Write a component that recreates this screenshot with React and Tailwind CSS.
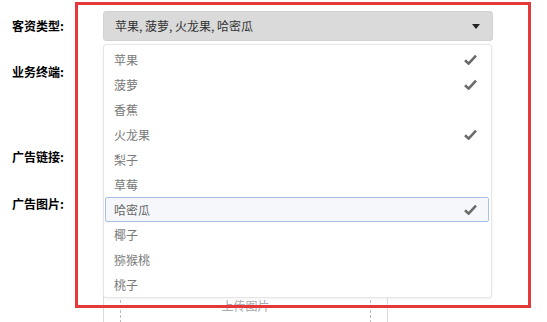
import React from "react";

const items = [
  { name: "苹果", checked: true },
  { name: "菠萝", checked: true },
  { name: "香蕉", checked: false },
  { name: "火龙果", checked: true },
  { name: "梨子", checked: false },
  { name: "草莓", checked: false },
  { name: "哈密瓜", checked: true, active: true },
  { name: "椰子", checked: false },
  { name: "猕猴桃", checked: false },
  { name: "桃子", checked: false },
];

function Check() {
  return (
    <svg width="13" height="11" viewBox="0 0 13 11" className="shrink-0">
      <path d="M1 6.2 L4.6 9.6 L12 1.6" fill="none" stroke="#6b6b6b" strokeWidth="2.6" strokeLinejoin="miter" />
    </svg>
  );
}

export default function App() {
  const font = { fontFamily: '"Microsoft YaHei", "Noto Sans CJK SC", "Noto Sans", sans-serif' };
  return (
    <div className="relative w-[547px] h-[322px] overflow-hidden bg-white text-[12px]" style={font}>
      {/* form */}
      <div className="flex flex-col pt-[11px] pl-[12px]">
        <div className="flex items-center h-[30px]">
          <div className="w-[91px] font-semibold text-black">客资类型:</div>
          <button className="w-[390px] h-[30px] flex items-center justify-between pl-[11px] pr-[12px] rounded-[3px] bg-[#dadada] border border-[#d2d2d2] text-[#333]">
            <span>苹果, 菠萝, 火龙果, 哈密瓜</span>
            <span className="w-0 h-0 border-l-[4px] border-r-[4px] border-t-[5px] border-l-transparent border-r-transparent border-t-[#222]" />
          </button>
        </div>
        <div className="flex items-center h-[30px] mt-[16px]">
          <div className="w-[91px] font-semibold text-black">业务终端:</div>
          <div className="w-[380px] h-[30px]" />
        </div>
        <div className="flex items-center h-[30px] mt-[55px]">
          <div className="w-[91px] font-semibold text-black">广告链接:</div>
          <div className="w-[380px] h-[30px]" />
        </div>
        <div className="flex items-start mt-[17px]">
          <div className="w-[91px] h-[30px] flex items-center font-semibold text-black">广告图片:</div>
          <div className="w-[285px] h-[150px] border border-[#dcdcdc] px-[16px] pt-[20px]">
            <div className="h-full border border-dashed border-[#bbb] flex justify-center pt-[86px] text-[#aaa]">
              上传图片
            </div>
          </div>
        </div>
      </div>

      {/* dropdown menu */}
      <div className="absolute left-[103px] top-[44px] w-[389px] h-[254px] bg-white border border-[#e6e6e6] rounded-[3px] shadow-[0_1px_3px_rgba(0,0,0,0.06)] pt-[2px] pl-[1px] pr-[2px]">
        {items.map((it) => (
          <div
            key={it.name}
            className={
              it.active
                ? "h-[25px] flex items-center justify-between pl-[8px] pr-[11px] border border-[#a9c0e6] bg-[#f5f7fa] rounded-[2px] text-[#666]"
                : "h-[25px] flex items-center justify-between pl-[9px] pr-[12px] text-[#7a7a7a]"
            }
          >
            <span>{it.name}</span>
            {it.checked && <Check />}
          </div>
        ))}
      </div>

      {/* annotation box */}
      <div className="absolute left-[75px] top-[2px] w-[456px] h-[306px] border-[3px] border-[#e5383b] pointer-events-none" />
    </div>
  );
}
